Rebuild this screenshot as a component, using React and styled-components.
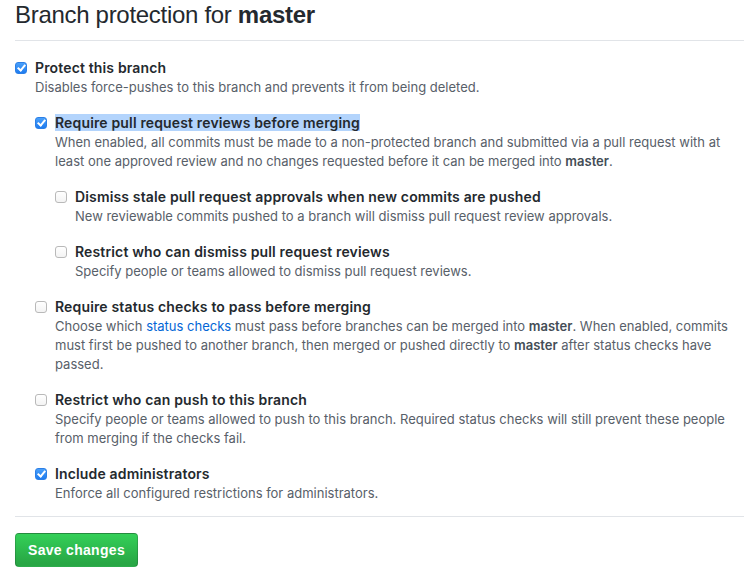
import React from "react";
import styled, { createGlobalStyle } from "styled-components";

const GlobalStyle = createGlobalStyle`
	body {
		margin: 0;
		background: #fff;
		font-family: Inter, "Liberation Sans", Helvetica, Arial, sans-serif;
		color: #24292e;
	}
`;

const Page = styled.div`
	padding: 0 5px 0 15px;
`;

const Title = styled.h2`
	margin: 0;
	padding-bottom: 10px;
	font-family: "Liberation Sans", Helvetica, Arial, sans-serif;
	font-size: 24px;
	font-weight: 400;
	line-height: 30px;
	letter-spacing: -0.3px;
	border-bottom: 1px solid #e1e4e8;
`;

const Stack = styled.div`
	display: flex;
	flex-direction: column;
	gap: 16px;
	margin-top: ${(p) => p.$top}px;
`;

const Item = styled.div`
	display: grid;
	grid-template-columns: 20px 1fr;
`;

const Body = styled.div`
	font-size: 14px;
	line-height: 20px;
`;

const Box = styled.input.attrs({ type: "checkbox" })`
	appearance: none;
	position: relative;
	box-sizing: border-box;
	width: 12px;
	height: 12px;
	margin: 4px 0 0 0;
	border: 1px solid #b9b9b9;
	border-radius: 3px;
	background: linear-gradient(#fff, #f3f3f3);

	&:checked {
		border-color: #2c7fe6;
		background: linear-gradient(#4aa0fa, #1e7cf0);
	}

	&:checked::after {
		content: "";
		position: absolute;
		left: 3px;
		top: 0px;
		width: 3px;
		height: 6px;
		border: solid #fff;
		border-width: 0 2px 2px 0;
		transform: rotate(40deg);
	}
`;

const Label = styled.label`
	font-weight: 600;
	letter-spacing: 0.15px;
	background: ${(p) => (p.$selected ? "#b3d4fc" : "transparent")};
`;

const Note = styled.p`
	margin: 0;
	font-size: 13px;
	line-height: 19px;
	color: #586069;

	b {
		font-weight: 600;
		color: #444d56;
	}
`;

const Link = styled.a`
	color: #0366d6;
	text-decoration: none;
`;

const Footer = styled.div`
	margin-top: 13px;
	padding-top: 16px;
	border-top: 1px solid #e1e4e8;
`;

const Button = styled.button`
	padding: 6px 12px;
	font-family: "Liberation Sans", Helvetica, Arial, sans-serif;
	font-size: 14px;
	font-weight: 700;
	line-height: 20px;
	letter-spacing: 0.3px;
	color: #fff;
	background: linear-gradient(-180deg, #34d058 0%, #28a745 90%);
	border: 1px solid rgba(27, 31, 35, 0.2);
	border-radius: 4px;
	cursor: pointer;
`;

function Option({ checked, selected, label, children, nested }) {
	return (
		<Item>
			<Box defaultChecked={checked} />
			<Body>
				<Label $selected={selected}>{label}</Label>
				<Note>{children}</Note>
				{nested && <Stack $top={16}>{nested}</Stack>}
			</Body>
		</Item>
	);
}

export default function App() {
	return (
		<Page>
			<GlobalStyle />
			<Title>
				Branch protection for <b>master</b>
			</Title>
			<Stack $top={17}>
				<Option
					checked
					label="Protect this branch"
					nested={
						<>
							<Option
								checked
								selected
								label="Require pull request reviews before merging"
								nested={
									<>
										<Option label="Dismiss stale pull request approvals when new commits are pushed">
											New reviewable commits pushed to a branch will dismiss pull request review approvals.
										</Option>
										<Option label="Restrict who can dismiss pull request reviews">
											Specify people or teams allowed to dismiss pull request reviews.
										</Option>
									</>
								}
							>
								When enabled, all commits must be made to a non-protected branch and submitted via a pull
								request with at least one approved review and no changes requested before it can be merged
								into <b>master</b>.
							</Option>
							<Option label="Require status checks to pass before merging">
								Choose which <Link href="#">status checks</Link> must pass before branches can be merged into{" "}
								<b>master</b>. When enabled, commits must first be pushed to another branch, then merged or
								pushed directly to <b>master</b> after status checks have passed.
							</Option>
							<Option label="Restrict who can push to this branch">
								Specify people or teams allowed to push to this branch. Required status checks will still
								prevent these people from merging if the checks fail.
							</Option>
							<Option checked label="Include administrators">
								Enforce all configured restrictions for administrators.
							</Option>
						</>
					}
				>
					Disables force-pushes to this branch and prevents it from being deleted.
				</Option>
			</Stack>
			<Footer>
				<Button>Save changes</Button>
			</Footer>
		</Page>
	);
}
